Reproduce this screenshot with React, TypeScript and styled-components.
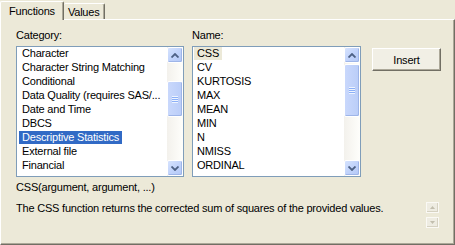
import React from "react";
import styled, { createGlobalStyle } from "styled-components";

const Global = createGlobalStyle`
  html, body { margin: 0; padding: 0; background: #ECE9D8; }
  body { font-family: "Liberation Sans", Arial, sans-serif; font-size: 11px; letter-spacing: -0.2px; color: #000; }
`;

const Window = styled.div`
  width: 455px;
  height: 245px;
  background: #ECE9D8;
  display: flex;
  flex-direction: column;
  overflow: hidden;
`;

const TabStrip = styled.div`
  display: flex;
  align-items: flex-end;
  height: 20px;
  margin-bottom: -1px;
  position: relative;
  z-index: 1;
`;

const Tab = styled.div<{ $active?: boolean }>`
  box-sizing: border-box;
  background: #ECE9D8;
  border-top: 1px solid #fff;
  border-left: ${(p) => (p.$active ? "1px solid #fff" : "none")};
  border-right: 1px solid #716F64;
  box-shadow: inset -1px 0 0 #ACA899;
  border-top-left-radius: 2px;
  border-top-right-radius: 2px;
  height: ${(p) => (p.$active ? "19px" : "16px")};
  margin-bottom: ${(p) => (p.$active ? "0" : "1px")};
  padding: ${(p) => (p.$active ? "2px 8px 0 8px" : "1px 4px 0 4px")};
  line-height: 14px;
  white-space: nowrap;
`;

const Panel = styled.div`
  flex: 1;
  box-sizing: border-box;
  border-top: 1px solid #fff;
  border-left: 1px solid #fff;
  border-right: 1px solid #716F64;
  border-bottom: 1px solid #716F64;
  box-shadow: inset -1px -1px 0 #ACA899;
  padding: 9px 12px 0 15px;
  display: flex;
  flex-direction: column;
`;

const ListsRow = styled.div`
  display: flex;
  gap: 8px;
`;

const Column = styled.div<{ $w: number }>`
  width: ${(p) => p.$w}px;
  display: flex;
  flex-direction: column;
`;

const Label = styled.div`
  line-height: 13px;
  height: 13px;
  margin-bottom: 4px;
`;

const ListBox = styled.div`
  box-sizing: border-box;
  height: 131px;
  border: 1px solid #7F9DB9;
  background: #fff;
  display: flex;
`;

const Items = styled.div<{ $pad: number }>`
  flex: 1;
  padding-left: ${(p) => p.$pad}px;
  overflow: hidden;
`;

const Item = styled.div`
  height: 14px;
  display: flex;
  align-items: flex-start;
`;

const ItemText = styled.span<{ $sel?: "focus" | "blur" }>`
  display: inline-block;
  height: 13px;
  line-height: 13px;
  padding: 0 3px;
  white-space: nowrap;
  background: ${(p) => (p.$sel === "focus" ? "#316AC5" : p.$sel === "blur" ? "#ECE9D8" : "transparent")};
  color: ${(p) => (p.$sel === "focus" ? "#fff" : "#000")};
`;

const ScrollBar = styled.div`
  width: 16px;
  display: flex;
  flex-direction: column;
  background: linear-gradient(to right, #F3F1EC, #FEFEFB);
`;

const ScrollBtn = styled.div`
  box-sizing: border-box;
  width: 16px;
  height: 16px;
  border: 1px solid #fff;
  border-radius: 2px;
  background: linear-gradient(135deg, #D6E3FE 0%, #C1D3FB 50%, #B4C8F6 100%);
  box-shadow: inset -1px -1px 0 #9EB5E8;
  display: flex;
  align-items: center;
  justify-content: center;
`;

const Track = styled.div<{ $top: number }>`
  flex: 1;
  padding-top: ${(p) => p.$top}px;
`;

const Thumb = styled.div<{ $h: number }>`
  box-sizing: border-box;
  height: ${(p) => p.$h}px;
  border: 1px solid #fff;
  border-radius: 2px;
  background: linear-gradient(to right, #C9D8FC, #BACDF8);
  box-shadow: inset -1px -1px 0 #9EB5E8;
  display: flex;
  align-items: center;
  justify-content: center;
`;

const Grip = styled.div`
  width: 6px;
  height: 7px;
  background: repeating-linear-gradient(to bottom, #EEF4FE 0 1px, #8CB0F8 1px 2px);
`;

const ButtonColumn = styled.div`
  margin-left: 3px;
  padding-top: 19px;
`;

const Button = styled.button`
  box-sizing: border-box;
  width: 69px;
  height: 23px;
  font: inherit;
  letter-spacing: inherit;
  color: #000;
  background: #F1EFE5;
  border: 1px solid;
  border-color: #fff #716F64 #716F64 #fff;
  box-shadow: inset -1px -1px 0 #ACA899;
  padding: 0;
`;

const Signature = styled.div`
  margin-top: 4px;
  line-height: 13px;
  height: 13px;
`;

const DescRow = styled.div`
  margin-top: 8px;
  display: flex;
  justify-content: space-between;
  padding-right: 3px;
`;

const Desc = styled.div`
  line-height: 13px;
`;

const Spinner = styled.div`
  display: flex;
  flex-direction: column;
  gap: 4px;
`;

const SpinBtn = styled.div`
  box-sizing: border-box;
  width: 13px;
  height: 11px;
  border: 1px solid #FAF9F5;
  background: #EEECE2;
  box-shadow: inset -1px -1px 0 #D6D2C2;
  display: flex;
  align-items: center;
  justify-content: center;
`;

const Chevron = ({ up, color = "#4D6185" }: { up?: boolean; color?: string }) => (
  <svg width="8" height="5" viewBox="0 0 8 5">
    <path
      d={up ? "M0.5 4.5 L4 1 L7.5 4.5" : "M0.5 0.5 L4 4 L7.5 0.5"}
      fill="none"
      stroke={color}
      strokeWidth="1.8"
    />
  </svg>
);

const SmallArrow = ({ up }: { up?: boolean }) => (
  <svg width="5" height="3" viewBox="0 0 5 3">
    <path d={up ? "M0 3 L2.5 0 L5 3 Z" : "M0 0 L2.5 3 L5 0 Z"} fill="#C2BEAE" />
  </svg>
);

const categories = [
  "Character",
  "Character String Matching",
  "Conditional",
  "Data Quality (requires SAS/...",
  "Date and Time",
  "DBCS",
  "Descriptive Statistics",
  "External file",
  "Financial",
];

const names = ["CSS", "CV", "KURTOSIS", "MAX", "MEAN", "MIN", "N", "NMISS", "ORDINAL"];

const List = ({
  items,
  selected,
  sel,
  pad,
  thumbTop,
  thumbH,
}: {
  items: string[];
  selected: number;
  sel: "focus" | "blur";
  pad: number;
  thumbTop: number;
  thumbH: number;
}) => (
  <ListBox>
    <Items $pad={pad}>
      {items.map((it, i) => (
        <Item key={it}>
          <ItemText $sel={i === selected ? sel : undefined}>{it}</ItemText>
        </Item>
      ))}
    </Items>
    <ScrollBar>
      <ScrollBtn>
        <Chevron up />
      </ScrollBtn>
      <Track $top={thumbTop}>
        <Thumb $h={thumbH}>
          <Grip />
        </Thumb>
      </Track>
      <ScrollBtn>
        <Chevron />
      </ScrollBtn>
    </ScrollBar>
  </ListBox>
);

export default function App() {
  return (
    <Window>
      <Global />
      <TabStrip>
        <Tab $active>Functions</Tab>
        <Tab>Values</Tab>
      </TabStrip>
      <Panel>
        <ListsRow>
          <Column $w={168}>
            <Label>Category:</Label>
            <List items={categories} selected={6} sel="focus" pad={2} thumbTop={18} thumbH={36} />
          </Column>
          <Column $w={169}>
            <Label>Name:</Label>
            <List items={names} selected={0} sel="blur" pad={1} thumbTop={1} thumbH={53} />
          </Column>
          <ButtonColumn>
            <Button>Insert</Button>
          </ButtonColumn>
        </ListsRow>
        <Signature>CSS(argument, argument, ...)</Signature>
        <DescRow>
          <Desc>The CSS function returns the corrected sum of squares of the provided values.</Desc>
          <Spinner>
            <SpinBtn>
              <SmallArrow up />
            </SpinBtn>
            <SpinBtn>
              <SmallArrow />
            </SpinBtn>
          </Spinner>
        </DescRow>
      </Panel>
    </Window>
  );
}
